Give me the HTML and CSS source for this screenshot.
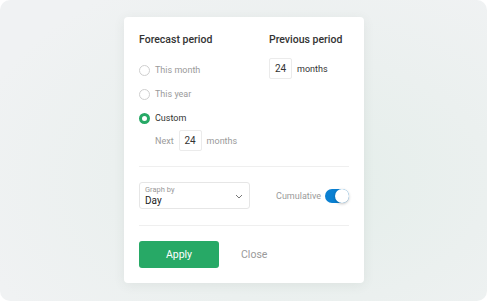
FILE: index.html
```html
<!DOCTYPE html>
<html>
<head>
<meta charset="utf-8">
<link rel="stylesheet" href="styles.css">
</head>
<body>
<div class="stage">
  <div class="card">
    <div class="top">
      <div class="col">
        <div class="title">Forecast period</div>
        <div class="radio-row"><span class="radio"></span><span class="label">This month</span></div>
        <div class="radio-row"><span class="radio"></span><span class="label">This year</span></div>
        <div class="radio-row"><span class="radio checked"></span><span class="label active">Custom</span></div>
        <div class="next-row"><span class="muted">Next</span><span class="num">24</span><span class="muted">months</span></div>
      </div>
      <div class="col">
        <div class="title">Previous period</div>
        <div class="prev-row"><span class="num">24</span><span class="dark">months</span></div>
      </div>
    </div>
    <div class="divider"></div>
    <div class="options">
      <div class="select">
        <div class="select-text">
          <span class="select-label">Graph by</span>
          <span class="select-value">Day</span>
        </div>
        <svg class="chev" width="8" height="5" viewBox="0 0 8 5"><path d="M1 1l3 3 3-3" fill="none" stroke="#777" stroke-width="1"/></svg>
      </div>
      <div class="cumulative">
        <span class="muted">Cumulative</span>
        <span class="toggle"><span class="knob"></span></span>
      </div>
    </div>
    <div class="divider"></div>
    <div class="actions">
      <button class="apply">Apply</button>
      <span class="close">Close</span>
    </div>
  </div>
</div>
</body>
</html>
```
FILE: styles.css
```css
* { box-sizing: border-box; }
html, body { margin: 0; padding: 0; background: #ffffff; }
body { font-family: Roboto, "Liberation Sans", sans-serif; }
.stage {
  width: 487px;
  height: 301px;
  border-radius: 10px;
  background: radial-gradient(ellipse 70% 75% at 62% 60%, #e4eeea 0%, #ebf0ef 55%, #f0f2f3 100%);
  display: flex;
  justify-content: center;
  align-items: flex-start;
  padding-top: 17px;
  overflow: hidden;
}
.card {
  width: 240px;
  height: 266px;
  margin-left: 1px;
  background: #fff;
  border-radius: 4px;
  box-shadow: 0 2px 12px rgba(60, 80, 70, 0.08);
  padding: 16px 15px 15px;
}
.top { display: grid; grid-template-columns: 1fr 80px; }
.title {
  font-size: 10.5px;
  line-height: 14px;
  font-weight: 500;
  color: #333;
  margin-bottom: 11px;
}
.radio-row { height: 24px; display: flex; align-items: center; gap: 5px; }
.radio {
  width: 11px; height: 11px;
  border-radius: 50%;
  border: 1px solid #cfcfcf;
  background: #fff;
}
.radio.checked { border: 3.5px solid #27a966; }
.label { font-size: 9px; color: #9a9a9a; }
.label.active { color: #333; }
.next-row {
  height: 21px;
  display: flex;
  align-items: center;
  gap: 5px;
  padding-left: 16px;
}
.muted { font-size: 9px; color: #9a9a9a; }
.dark { font-size: 9px; color: #333; }
.num {
  width: 23px; height: 21px;
  border: 1px solid #ebebeb;
  border-radius: 2px;
  display: flex; align-items: center; justify-content: center;
  font-size: 10px; color: #333;
}
.prev-row { display: flex; align-items: center; gap: 5px; }
.divider { height: 1px; background: #efefef; margin: 15px 0; }
.options + .divider { margin-top: 16px; }
.options { display: flex; align-items: center; justify-content: space-between; }
.select {
  width: 111px; height: 27px;
  border: 1px solid #e6e6e6;
  border-radius: 3px;
  padding: 0 6px 0 5px;
  display: flex; align-items: center; justify-content: space-between;
}
.select-text { display: flex; flex-direction: column; }
.select-label { font-size: 7.5px; line-height: 10px; color: #9a9a9a; }
.select-value { font-size: 10px; line-height: 12px; color: #222; }
.chev { margin-top: 1px; }
.cumulative { display: flex; align-items: center; gap: 4px; }
.toggle {
  width: 24px; height: 14px;
  border-radius: 7px;
  background: #0a80d2;
  position: relative;
}
.knob {
  position: absolute;
  right: 0; top: 0;
  width: 14px; height: 14px;
  border-radius: 50%;
  background: #fff;
  box-shadow: 0 1px 3px rgba(0,0,0,0.25);
}
.actions { display: flex; align-items: center; gap: 22px; }
.apply {
  width: 80px; height: 27px;
  border: none;
  border-radius: 3px;
  background: #27a966;
  color: #fff;
  font-family: inherit;
  font-size: 10.5px;
  padding: 0;
}
.close { font-size: 10.5px; color: #9a9a9a; }
```
